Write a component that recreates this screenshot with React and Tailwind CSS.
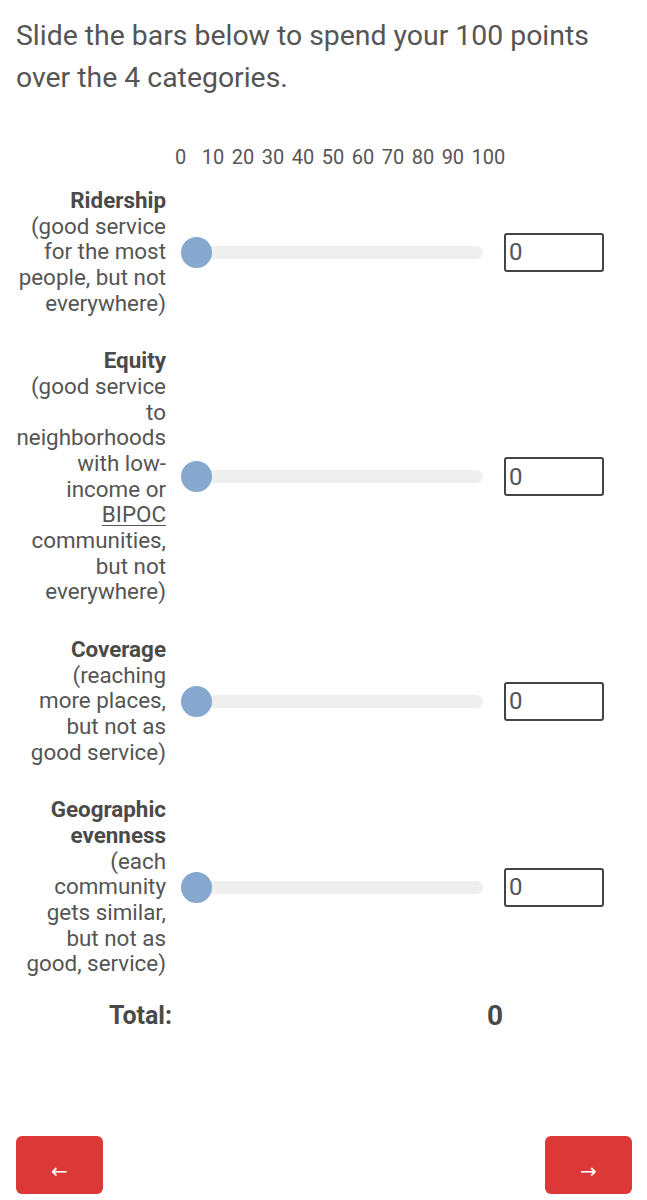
import React from "react";

function Slider() {
  return (
    <div className="relative ml-[15px] h-[31px] w-[302px] shrink-0">
      <div className="absolute left-[8px] right-0 top-[9px] h-[13px] rounded-full bg-[#efefef]" />
      <div className="absolute left-0 top-0 h-[31px] w-[31px] rounded-full bg-[#86a8cf]" />
    </div>
  );
}

function NumBox() {
  return (
    <div className="ml-[21px] flex h-[39px] w-[100px] shrink-0 items-center rounded-[3px] border-2 border-[#444] pl-[3px] text-[24px] leading-none text-[#555]">
      0
    </div>
  );
}

function Row({ title, lines }) {
  return (
    <div className="flex items-center">
      <div className="w-[150px] shrink-0 whitespace-nowrap text-right text-[22.4px] leading-[25.67px] text-[#555]">
        {title.map((t) => (
          <div key={t} className="font-bold text-[#4a4a4a]">
            {t}
          </div>
        ))}
        {lines.map((l, i) =>
          l === "BIPOC" ? (
            <div key={i}>
              <span className="underline decoration-1 underline-offset-[3px]">BIPOC</span>
            </div>
          ) : (
            <div key={i}>{l}</div>
          )
        )}
      </div>
      <Slider />
      <NumBox />
    </div>
  );
}

export default function App() {
  const scale = ["10", "20", "30", "40", "50", "60", "70", "80", "90", "100"];
  return (
    <div
      className="min-h-[1200px] bg-white px-4 text-[#555]"
      style={{ fontFamily: "Roboto, 'Noto Sans', sans-serif" }}
    >
      <div className="pt-[15px] text-[28.4px] leading-[42px] text-[#555]">
        Slide the bars below to spend your 100 points over the 4 categories.
      </div>

      <div className="mt-[46px] flex pl-[159px] text-[20px] leading-[25px] text-[#555]">
        <span>0</span>
        <span className="ml-[15.5px] flex gap-[7.5px]">
          {scale.map((s) => (
            <span key={s}>{s}</span>
          ))}
        </span>
      </div>

      <div className="mt-[18px] flex flex-col gap-[32px]">
        <Row
          title={["Ridership"]}
          lines={["(good service", "for the most", "people, but not", "everywhere)"]}
        />
        <Row
          title={["Equity"]}
          lines={[
            "(good service",
            "to",
            "neighborhoods",
            "with low-",
            "income or",
            "BIPOC",
            "communities,",
            "but not",
            "everywhere)",
          ]}
        />
        <Row
          title={["Coverage"]}
          lines={["(reaching", "more places,", "but not as", "good service)"]}
        />
        <Row
          title={["Geographic", "evenness"]}
          lines={["(each", "community", "gets similar,", "but not as", "good, service)"]}
        />
      </div>

      <div className="mt-[23px] flex items-center">
        <div className="w-[156px] text-right text-[25px] font-bold leading-[32px] text-[#4a4a4a]">
          Total:
        </div>
        <div className="ml-[315px] text-[28px] font-bold leading-[32px] text-[#4a4a4a]">
          0
        </div>
      </div>

      <div className="mt-[104px] flex justify-between">
        <button
          className="flex h-[58px] w-[87px] items-end justify-center rounded-[6px] bg-[#dc3838] pb-[13px] text-[20px] leading-[20px] text-white"
          style={{ fontFamily: "'DejaVu Sans', sans-serif" }}
        >
          ←
        </button>
        <button
          className="mr-[-1px] flex h-[58px] w-[87px] items-end justify-center rounded-[6px] bg-[#dc3838] pb-[13px] text-[20px] leading-[20px] text-white"
          style={{ fontFamily: "'DejaVu Sans', sans-serif" }}
        >
          →
        </button>
      </div>
    </div>
  );
}
